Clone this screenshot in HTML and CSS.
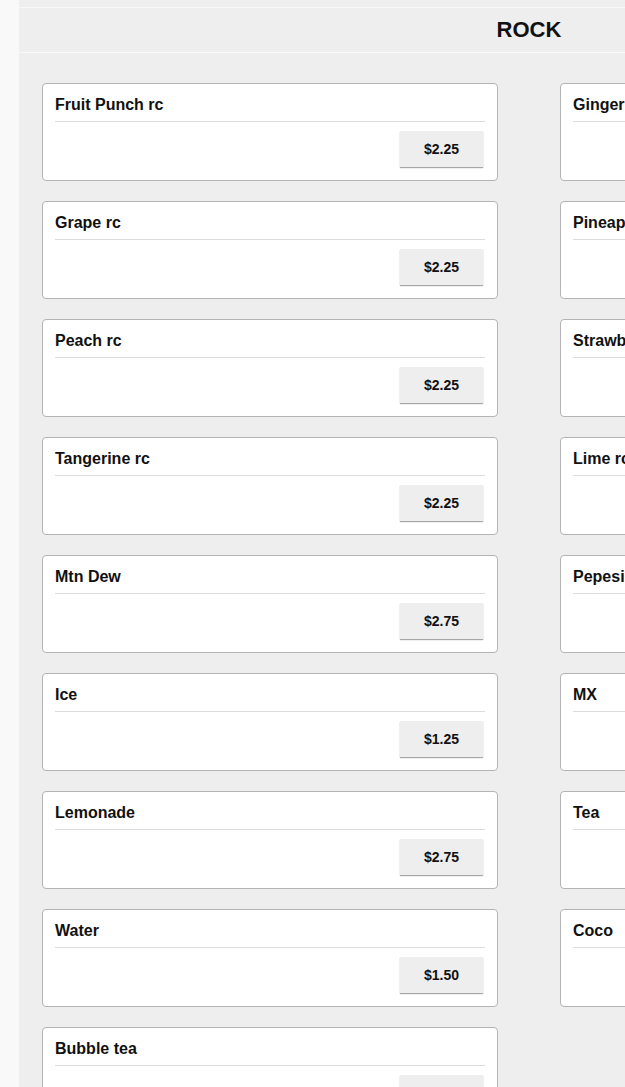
FILE: index.html
```html
<!DOCTYPE html>
<html>
<head>
<meta charset="utf-8">
<link rel="stylesheet" href="styles.css">
</head>
<body>
<div class="panel">
  <div class="topbar"></div>
  <div class="header"><h1 class="heading">ROCK</h1></div>
  <div class="grid">
    <div class="card"><div class="title">Fruit Punch rc</div><div class="actions"><button class="price">$2.25</button></div></div>
    <div class="card"><div class="title">Ginger ale rc</div><div class="actions"><button class="price">$2.25</button></div></div>
    <div class="card"><div class="title">Grape rc</div><div class="actions"><button class="price">$2.25</button></div></div>
    <div class="card"><div class="title">Pineapple rc</div><div class="actions"><button class="price">$2.25</button></div></div>
    <div class="card"><div class="title">Peach rc</div><div class="actions"><button class="price">$2.25</button></div></div>
    <div class="card"><div class="title">Strawberry rc</div><div class="actions"><button class="price">$2.25</button></div></div>
    <div class="card"><div class="title">Tangerine rc</div><div class="actions"><button class="price">$2.25</button></div></div>
    <div class="card"><div class="title">Lime rc</div><div class="actions"><button class="price">$2.25</button></div></div>
    <div class="card"><div class="title">Mtn Dew</div><div class="actions"><button class="price">$2.75</button></div></div>
    <div class="card"><div class="title">Pepesi</div><div class="actions"><button class="price">$2.75</button></div></div>
    <div class="card"><div class="title">Ice</div><div class="actions"><button class="price">$1.25</button></div></div>
    <div class="card"><div class="title">MX</div><div class="actions"><button class="price">$2.75</button></div></div>
    <div class="card"><div class="title">Lemonade</div><div class="actions"><button class="price">$2.75</button></div></div>
    <div class="card"><div class="title">Tea</div><div class="actions"><button class="price">$2.25</button></div></div>
    <div class="card"><div class="title">Water</div><div class="actions"><button class="price">$1.50</button></div></div>
    <div class="card"><div class="title">Coco</div><div class="actions"><button class="price">$2.25</button></div></div>
    <div class="card"><div class="title">Bubble tea</div><div class="actions"><button class="price">$3.50</button></div></div>
  </div>
</div>
</body>
</html>
```
FILE: styles.css
```css
html, body {
  margin: 0;
  padding: 0;
}
body {
  background: #f9f9f9;
  font-family: "Liberation Sans", Arial, sans-serif;
  color: #111;
  overflow: hidden;
}
.panel {
  margin-left: 19px;
  width: 1020px;
  background: #eeeeee;
  min-height: 1200px;
}
.topbar {
  height: 7px;
  border-bottom: 1px solid #f8f8f8;
}
.header {
  height: 44px;
  display: flex;
  align-items: center;
  justify-content: center;
  border-bottom: 1px solid #f8f8f8;
}
.heading {
  margin: 0;
  font-size: 22px;
  font-weight: 700;
  line-height: 26px;
}
.grid {
  display: grid;
  grid-template-columns: 456px 456px;
  column-gap: 62px;
  row-gap: 20px;
  padding: 30px 23px 30px 23px;
}
.card {
  box-sizing: border-box;
  height: 98px;
  background: #fff;
  border: 1px solid #b4b4b4;
  border-radius: 4px;
  padding: 12px 12px 13px 12px;
}
.title {
  font-size: 16px;
  font-weight: 700;
  line-height: 18px;
  padding-bottom: 7px;
  border-bottom: 1px solid #dddddd;
  white-space: nowrap;
}
.actions {
  display: flex;
  justify-content: flex-end;
  margin-top: 9px;
}
.price {
  width: 83px;
  height: 36px;
  margin-right: 2px;
  background: #eeeeee;
  border: none;
  border-radius: 0;
  box-shadow: 0 1px 1px rgba(0, 0, 0, 0.35);
  font-family: "Liberation Sans", Arial, sans-serif;
  font-size: 14px;
  font-weight: 700;
  color: #111;
  padding: 0;
}
```
